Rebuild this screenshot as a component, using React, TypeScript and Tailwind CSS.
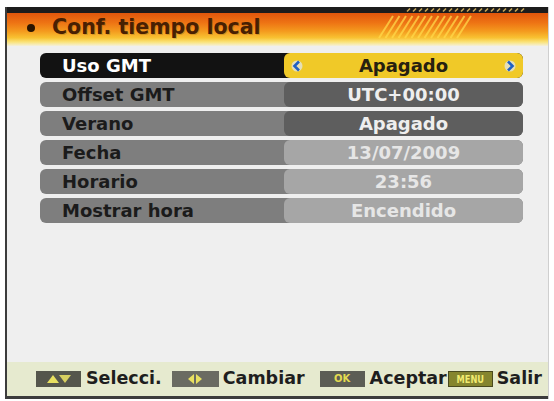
import React from "react";

type Row = { label: string; value: string; kind: "active" | "dark" | "dim" };

const rows: Row[] = [
  { label: "Uso GMT", value: "Apagado", kind: "active" },
  { label: "Offset GMT", value: "UTC+00:00", kind: "dark" },
  { label: "Verano", value: "Apagado", kind: "dark" },
  { label: "Fecha", value: "13/07/2009", kind: "dim" },
  { label: "Horario", value: "23:56", kind: "dim" },
  { label: "Mostrar hora", value: "Encendido", kind: "dim" },
];

const Chevron = ({ dir }: { dir: "left" | "right" }) => (
  <svg width="12" height="14" viewBox="0 0 12 14">
    <circle cx="6" cy="7" r="5.5" fill="#dfe8f4" opacity="0.7" />
    <polyline
      points={dir === "left" ? "8,2.5 3.5,7 8,11.5" : "4,2.5 8.5,7 4,11.5"}
      fill="none"
      stroke="#1f5fc4"
      strokeWidth="2.6"
    />
  </svg>
);

const SettingRow = ({ row }: { row: Row }) => {
  const rowBg =
    row.kind === "active" ? "bg-[#121212] text-white" : "bg-[#7e7e7e] text-[#1b1b1b]";
  const valueBg =
    row.kind === "active"
      ? "bg-[#f0c928] text-[#262010]"
      : row.kind === "dark"
        ? "bg-[#5e5e5e] text-[#eeeeee]"
        : "bg-[#a6a6a6] text-[#e6e6e6]";
  return (
    <div className={`flex h-[25px] w-[483px] items-center rounded-[6px] ${rowBg}`}>
      <div className="w-[244px] pl-[22px] text-[18px] font-bold leading-none">{row.label}</div>
      <div
        className={`flex h-full w-[239px] items-center justify-between rounded-[6px] px-[7px] ${valueBg}`}
      >
        <span className="w-[12px]">{row.kind === "active" && <Chevron dir="left" />}</span>
        <span className="text-[18px] font-bold leading-none">{row.value}</span>
        <span className="w-[12px]">{row.kind === "active" && <Chevron dir="right" />}</span>
      </div>
    </div>
  );
};

const KeyBox = ({ children, className }: { children: React.ReactNode; className: string }) => (
  <div className={`flex h-[16px] items-center justify-center ${className}`}>{children}</div>
);

export default function App() {
  return (
    <div
      className="h-[401px] w-[554px] overflow-hidden bg-white pl-[5px] pt-[7px]"
      style={{ fontFamily: '"DejaVu Sans", Verdana, sans-serif' }}
    >
      <div className="flex h-[392px] w-[544px] flex-col border-l-2 border-r border-l-[#3c3c3c] border-r-[#cfcfcf]">
        <div className="relative">
          <div className="h-[6px] bg-[#1c1c1c]" />
          <div className="flex h-[33px] items-center bg-[linear-gradient(to_bottom,#e0560c_0%,#ee7414_30%,#f49a1e_55%,#f8c232_75%,#fae37a_88%,#f4f0dc_100%)] pb-[4px] pl-[20px]">
            <span className="mr-[17px] h-[8px] w-[8px] rounded-full bg-[#2a1400]" />
            <span className="text-[20.5px] font-bold leading-none text-[#482002] [text-shadow:1px_1px_0_rgba(0,0,0,0.15)]">
              Conf. tiempo local
            </span>
          </div>
          <svg
            className="absolute left-[360px] top-0"
            width="170"
            height="36"
            viewBox="0 0 170 36"
          >
            {Array.from({ length: 20 }).map((_, i) => (
              <line
                key={"d" + i}
                x1={40 + i * 6}
                y1={4.5}
                x2={43 + i * 6}
                y2={1.5}
                stroke="#c9a85a"
                strokeWidth="1.6"
              />
            ))}
            {Array.from({ length: 13 }).map((_, i) => (
              <line
                key={"s" + i}
                x1={12 + i * 6.5}
                y1={31}
                x2={26 + i * 6.5}
                y2={9}
                stroke="#ffd84a"
                strokeOpacity={0.75}
                strokeWidth="2"
              />
            ))}
          </svg>
        </div>

        <div className="flex flex-1 flex-col gap-[4px] bg-[#efefef] pl-[33px] pt-[7px]">
          {rows.map((r) => (
            <SettingRow key={r.label} row={r} />
          ))}
        </div>

        <div className="flex h-[37px] items-center border-b-[3px] border-[#3c3c3c] bg-[#e6eacf] pl-[29px] text-[17.5px] font-bold leading-none text-[#1e1e1e]">
          <KeyBox className="w-[45px] bg-[#55564c]">
            <svg width="26" height="10" viewBox="0 0 26 10">
              <polygon points="1,9 7,1 13,9" fill="#e8e060" />
              <polygon points="13,1 25,1 19,9" fill="#d8d060" />
            </svg>
          </KeyBox>
          <span className="ml-[5px]">Selecci.</span>
          <KeyBox className="ml-[10px] w-[47px] bg-[#6a6b62]">
            <svg width="16" height="10" viewBox="0 0 16 10">
              <polygon points="7,0 7,10 1,5" fill="#e8e060" />
              <polygon points="9,0 9,10 15,5" fill="#e8e060" />
            </svg>
          </KeyBox>
          <span className="ml-[4px]">Cambiar</span>
          <KeyBox className="ml-[15px] w-[45px] bg-[#5c5d55]">
            <span className="text-[10px] font-bold text-[#e4dc50]">OK</span>
          </KeyBox>
          <span className="ml-[5px]">Aceptar</span>
          <KeyBox className="ml-[1px] w-[45px] border border-[#4a4a20] bg-[#85852e]">
            <span className="scale-x-75 text-[11px] font-bold text-[#f0ea70]">MENU</span>
          </KeyBox>
          <span className="ml-[4px]">Salir</span>
        </div>
      </div>
    </div>
  );
}
